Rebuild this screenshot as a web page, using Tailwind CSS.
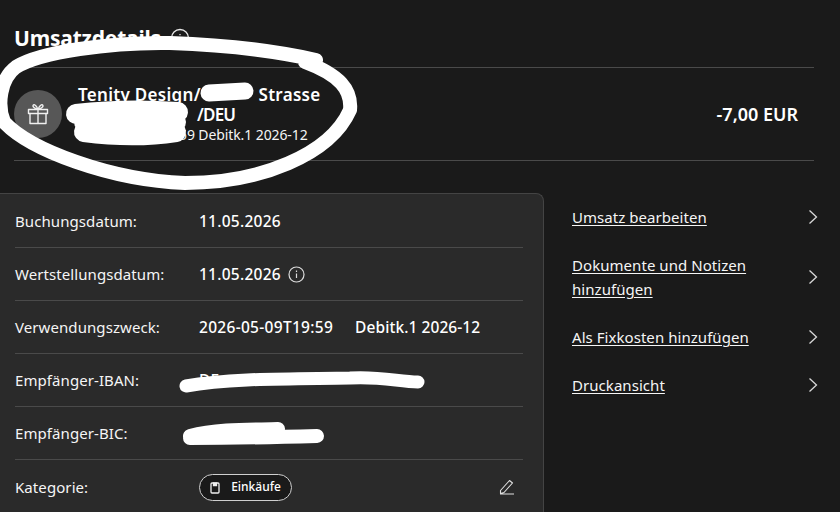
<!DOCTYPE html>
<html lang="de">
<head>
<meta charset="utf-8">
<script src="https://cdn.jsdelivr.net/npm/@tailwindcss/browser@4"></script>
</head>
<body class="bg-[#1a1a1a] text-[#f5f5f5] font-['Noto_Sans',sans-serif] text-[15px] leading-6 overflow-hidden">
<div class="relative w-[840px] h-[512px] overflow-hidden">
  <div class="pl-[14px] pr-[26px]">
    <div class="h-[68px] border-b border-[#4a4a4a] pt-[23px]">
      <h1 class="flex items-center gap-[9px] text-[21px] leading-[30px] font-bold tracking-[-0.2px] text-white">Umsatzdetails
        <svg class="w-[20px] h-[20px]" viewBox="0 0 20 20" fill="none" stroke="#e8e8e8" stroke-width="1.3"><circle cx="10" cy="10" r="8.5"/><path d="M10 9v5M10 6v1.2"/></svg>
      </h1>
    </div>
    <div class="h-[93px] border-b border-[#4a4a4a] flex items-center justify-between pr-[16px]">
      <div class="flex items-center gap-[16px]">
        <div class="w-[48px] h-[48px] rounded-full bg-[#575757] flex items-center justify-center">
          <svg class="w-[22px] h-[22px]" viewBox="0 0 22 22" fill="none" stroke="#f0f0f0" stroke-width="1.4" stroke-linejoin="round" stroke-linecap="round"><rect x="1.5" y="6.5" width="19" height="4"/><path d="M3 10.5V20.5H19V10.5M11 6.5V20.5M11 6.5C9 5.5 6 5 6 3C6 1 9 1 11 6.5C13 1 16 1 16 3C16 5 13 5.5 11 6.5Z"/></svg>
        </div>
        <div class="w-[270px] pt-[1px]">
          <p class="text-[17px] leading-[20px] font-semibold tracking-[0.3px] text-white whitespace-nowrap">Tenity Design/<span class="inline-block w-[53px]"></span> Strasse</p>
          <p class="text-[17px] leading-[20px] font-semibold tracking-[-0.8px] text-white pl-[119px]">/DEU</p>
          <p class="text-[14px] leading-[20px] tracking-[-0.1px] pl-[101px] whitespace-nowrap">59 Debitk.1 2026-12</p>
        </div>
      </div>
      <p class="text-[18px] font-semibold text-white">-7,00 EUR</p>
    </div>
  </div>
  <div class="flex mt-[32px]">
    <dl class="w-[544px] shrink-0 h-[400px] bg-[#2a2a2a] border-t border-r border-[#444] rounded-tr-lg pl-[15px] pr-[20px] tracking-[0.08px]">
      <div class="h-[54px] border-b border-[#4a4a4a] flex items-center"><dt class="w-[184px]">Buchungsdatum:</dt><dd class="text-white text-[15.5px] font-medium tracking-[0.25px]">11.05.2026</dd></div>
      <div class="h-[53px] border-b border-[#4a4a4a] flex items-center"><dt class="w-[184px]">Wertstellungsdatum:</dt><dd class="flex items-center gap-[7px] text-white text-[15.5px] font-medium tracking-[0.25px]">11.05.2026
        <svg class="w-[17px] h-[17px]" viewBox="0 0 17 17" fill="none" stroke="#dcdcdc" stroke-width="1.2"><circle cx="8.5" cy="8.5" r="7.5"/><path d="M8.5 7.5v4.5M8.5 4.6v1.3"/></svg></dd></div>
      <div class="h-[53px] border-b border-[#4a4a4a] flex items-center"><dt class="w-[184px]">Verwendungszweck:</dt><dd class="flex gap-[22px] text-white text-[15.5px] font-medium"><span class="tracking-[0.3px]">2026-05-09T19:59</span><span>Debitk.1 2026-12</span></dd></div>
      <div class="h-[53px] border-b border-[#4a4a4a] flex items-center"><dt class="w-[184px]">Empfänger-IBAN:</dt><dd class="text-white text-[15.5px] font-medium">DE</dd></div>
      <div class="h-[53px] border-b border-[#4a4a4a] flex items-center"><dt class="w-[184px]">Empfänger-BIC:</dt><dd></dd></div>
      <div class="h-[54px] flex items-center"><dt class="w-[184px]">Kategorie:</dt>
        <dd class="flex-1 flex items-center justify-between pr-[8px]">
          <span class="h-[27px] w-[93px] flex items-center justify-center gap-[11px] rounded-full border border-[#cfcfcf] bg-[#1a1a1a] text-[12px] font-medium tracking-normal text-white">
            <svg class="w-[10px] h-[13px]" viewBox="0 0 10 13" fill="none" stroke="#f0f0f0" stroke-width="1.3"><rect x="1" y="2" width="8" height="10" rx="1"/><path d="M3.5 1.5v3h3v-3" fill="#f0f0f0"/></svg>
            Einkäufe
          </span>
          <svg class="w-[16px] h-[16px]" viewBox="0 0 16 16" fill="none" stroke="#e0e0e0" stroke-width="1.1" stroke-linejoin="round"><path d="M1.5 11.5L10.5 1.5L13.5 4L5 13.5L1.5 14.5ZM1 15H15"/></svg>
        </dd>
      </div>
    </dl>
    <nav class="flex-1 pl-[28px] pr-[22px] pt-[12px] flex flex-col gap-[24px] tracking-[0.05px]">
      <a class="flex items-center justify-between"><span class="underline underline-offset-2">Umsatz bearbeiten</span>
        <svg class="w-[10px] h-[16px]" viewBox="0 0 10 16" fill="none" stroke="#d8d8d8" stroke-width="1.3"><path d="M1.5 1.5L8.5 8L1.5 14.5"/></svg></a>
      <a class="flex items-center justify-between"><span class="w-[200px] underline underline-offset-2">Dokumente und Notizen hinzufügen</span>
        <svg class="w-[10px] h-[16px]" viewBox="0 0 10 16" fill="none" stroke="#d8d8d8" stroke-width="1.3"><path d="M1.5 1.5L8.5 8L1.5 14.5"/></svg></a>
      <a class="flex items-center justify-between"><span class="underline underline-offset-2">Als Fixkosten hinzufügen</span>
        <svg class="w-[10px] h-[16px]" viewBox="0 0 10 16" fill="none" stroke="#d8d8d8" stroke-width="1.3"><path d="M1.5 1.5L8.5 8L1.5 14.5"/></svg></a>
      <a class="flex items-center justify-between"><span class="underline underline-offset-2">Druckansicht</span>
        <svg class="w-[10px] h-[16px]" viewBox="0 0 10 16" fill="none" stroke="#d8d8d8" stroke-width="1.3"><path d="M1.5 1.5L8.5 8L1.5 14.5"/></svg></a>
    </nav>
  </div>
  <svg class="absolute inset-0 w-[840px] h-[512px] pointer-events-none" viewBox="0 0 840 512" fill="none" stroke="#fff" stroke-linecap="round" stroke-linejoin="round">
    <path stroke-width="14" d="M316 60C280 52 230 45 170 43C110 42 40 52 16 67C0 79 -3 105 4 122C30 150 110 180 185 183C260 183 330 155 350 110C352 90 340 75 305 62"/>
    <path stroke-width="17" d="M209 93L245 91"/>
    <path stroke-width="20" d="M76 114C110 110 150 110 178 112M84 132C115 136 150 136 176 132M84 122L176 122"/>
    <path stroke-width="13" d="M186 386C230 378 290 379 350 378C380 376 400 382 418 382"/>
    <path stroke-width="14" d="M190 436C220 428 260 430 278 429M190 438C230 438 280 437 317 436"/>
  </svg>
</div>
</body>
</html>
